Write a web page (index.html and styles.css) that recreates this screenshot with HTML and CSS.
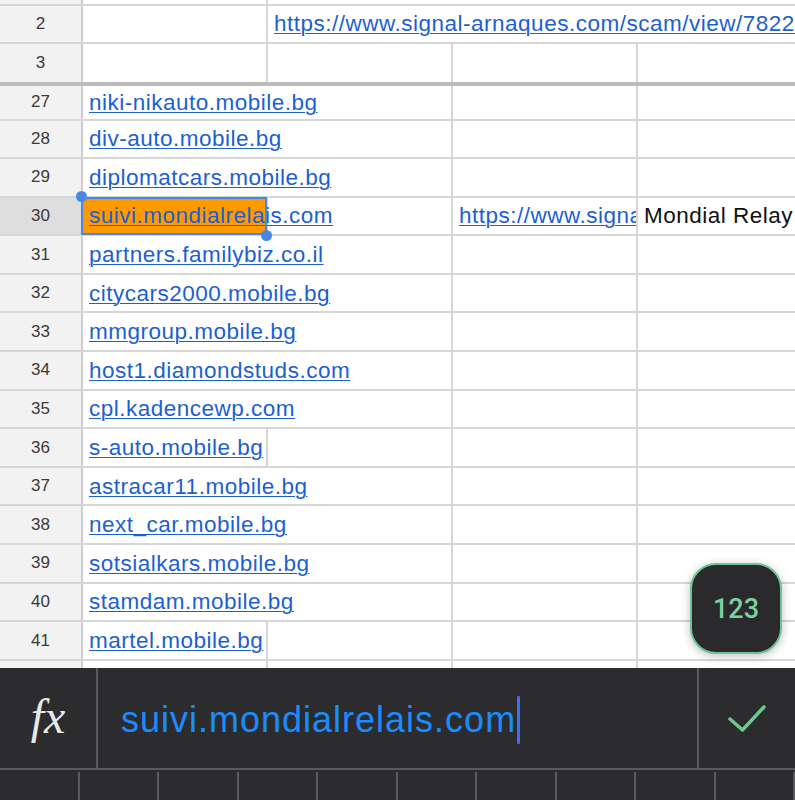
FILE: index.html
```html
<!DOCTYPE html>
<html lang="fr">
<head>
    <meta charset="UTF-8">
    <meta name="viewport" content="width=device-width, initial-scale=1.0">
    <title>Feuille de calcul</title>
    <link rel="stylesheet" href="styles.css">
</head>
<body>
    <div class="sheet">
        <div class="row row-top">
            <div class="num"></div>
            <div class="cell"></div>
            <div class="cell rest"></div>
        </div>
        <div class="row">
            <div class="num">2</div>
            <div class="cell"></div>
            <div class="cell rest"><a class="link" href="#">https://www.signal-arnaques.com/scam/view/782254</a></div>
        </div>
        <div class="row row-frozen">
            <div class="num">3</div>
            <div class="cell"></div>
            <div class="cell"></div>
            <div class="cell"></div>
            <div class="cell"></div>
        </div>

        <div class="row row-first">
            <div class="num">27</div>
            <div class="cell wide"><a class="link" href="#">niki-nikauto.mobile.bg</a></div>
            <div class="cell"></div>
            <div class="cell"></div>
        </div>
        <div class="row">
            <div class="num">28</div>
            <div class="cell wide"><a class="link" href="#">div-auto.mobile.bg</a></div>
            <div class="cell"></div>
            <div class="cell"></div>
        </div>
        <div class="row">
            <div class="num">29</div>
            <div class="cell wide"><a class="link" href="#">diplomatcars.mobile.bg</a></div>
            <div class="cell"></div>
            <div class="cell"></div>
        </div>
        <div class="row row-active">
            <div class="num">30</div>
            <div class="cell selected">
                <a class="link" href="#">suivi.mondialrelais.com</a>
                <span class="handle handle-start"></span>
                <span class="handle handle-end"></span>
            </div>
            <div class="cell"></div>
            <div class="cell"><a class="link" href="#">https://www.signal-arnaques.com/scam/view/782254</a></div>
            <div class="cell"><span class="plain">Mondial Relay</span></div>
        </div>
        <div class="row">
            <div class="num">31</div>
            <div class="cell wide"><a class="link" href="#">partners.familybiz.co.il</a></div>
            <div class="cell"></div>
            <div class="cell"></div>
        </div>
        <div class="row">
            <div class="num">32</div>
            <div class="cell wide"><a class="link" href="#">citycars2000.mobile.bg</a></div>
            <div class="cell"></div>
            <div class="cell"></div>
        </div>
        <div class="row">
            <div class="num">33</div>
            <div class="cell wide"><a class="link" href="#">mmgroup.mobile.bg</a></div>
            <div class="cell"></div>
            <div class="cell"></div>
        </div>
        <div class="row">
            <div class="num">34</div>
            <div class="cell wide"><a class="link" href="#">host1.diamondstuds.com</a></div>
            <div class="cell"></div>
            <div class="cell"></div>
        </div>
        <div class="row">
            <div class="num">35</div>
            <div class="cell wide"><a class="link" href="#">cpl.kadencewp.com</a></div>
            <div class="cell"></div>
            <div class="cell"></div>
        </div>
        <div class="row">
            <div class="num">36</div>
            <div class="cell"><a class="link" href="#">s-auto.mobile.bg</a></div>
            <div class="cell"></div>
            <div class="cell"></div>
            <div class="cell"></div>
        </div>
        <div class="row">
            <div class="num">37</div>
            <div class="cell wide"><a class="link" href="#">astracar11.mobile.bg</a></div>
            <div class="cell"></div>
            <div class="cell"></div>
        </div>
        <div class="row">
            <div class="num">38</div>
            <div class="cell wide"><a class="link" href="#">next_car.mobile.bg</a></div>
            <div class="cell"></div>
            <div class="cell"></div>
        </div>
        <div class="row">
            <div class="num">39</div>
            <div class="cell wide"><a class="link" href="#">sotsialkars.mobile.bg</a></div>
            <div class="cell"></div>
            <div class="cell"></div>
        </div>
        <div class="row">
            <div class="num">40</div>
            <div class="cell wide"><a class="link" href="#">stamdam.mobile.bg</a></div>
            <div class="cell"></div>
            <div class="cell"></div>
        </div>
        <div class="row">
            <div class="num">41</div>
            <div class="cell"><a class="link" href="#">martel.mobile.bg</a></div>
            <div class="cell"></div>
            <div class="cell"></div>
            <div class="cell"></div>
        </div>
        <div class="row">
            <div class="num"></div>
            <div class="cell"></div>
            <div class="cell"></div>
            <div class="cell"></div>
            <div class="cell"></div>
        </div>
    </div>

    <button class="keypad-toggle">123</button>

    <div class="formula-bar">
        <div class="fx">fx</div>
        <div class="entry">
            <span class="entry-text">suivi.mondialrelais.com</span><span class="caret"></span>
        </div>
        <div class="confirm">
            <svg class="check-icon" viewBox="0 0 40 30">
                <path d="M3 16 L15.5 27 L37 4"/>
            </svg>
        </div>
    </div>

    <div class="keys">
        <div class="key"></div>
        <div class="key"></div>
        <div class="key"></div>
        <div class="key"></div>
        <div class="key"></div>
        <div class="key"></div>
        <div class="key"></div>
        <div class="key"></div>
        <div class="key"></div>
        <div class="key"></div>
    </div>
</body>
</html>
```

FILE: styles.css
```css
* {
    margin: 0;
    padding: 0;
    box-sizing: border-box;
}

body {
    font-family: "Liberation Sans", Arial, sans-serif;
    background: #2c2c2e;
    width: 795px;
    height: 800px;
    overflow: hidden;
    position: relative;
}

.sheet {
    height: 668px;
    overflow: hidden;
    background: #ffffff;
}

.row {
    display: grid;
    grid-template-columns: 83px 185px 185px 185px 1fr;
    height: 37.5px;
    border-bottom: 2px solid #d6d6d6;
}

.row-top {
    height: 6px;
}

.row-frozen {
    height: 42px;
    border-bottom: 4px solid #bcbcbc;
}

.row-first {
    height: 35px;
}

.row-first ~ .row {
    height: 38.6px;
}

.num {
    background: #f2f2f2;
    border-right: 2px solid #cdcdcd;
    display: flex;
    align-items: center;
    justify-content: center;
    font-size: 17px;
    color: #3a3a3a;
}

.row-active .num {
    background: #dedede;
}

.cell {
    border-right: 2px solid #d6d6d6;
    display: flex;
    align-items: center;
    padding-left: 6px;
    padding-top: 1px;
    white-space: nowrap;
    overflow: hidden;
    min-width: 0;
}

.cell:last-child {
    border-right: none;
}

.wide {
    grid-column: span 2;
}

.rest {
    grid-column: 3 / -1;
    border-right: none;
}

.link {
    color: #1c5fd3;
    text-decoration: underline;
    text-decoration-thickness: 1px;
    text-underline-offset: 2px;
    font-size: 22.5px;
    letter-spacing: 0.5px;
}

.plain {
    color: #111111;
    font-size: 22.5px;
    letter-spacing: 0.5px;
}

.selected {
    background: #ff9900;
    overflow: visible;
    position: relative;
}

.selected::after {
    content: '';
    position: absolute;
    top: -1px;
    left: -2px;
    right: -1px;
    bottom: -1px;
    border: 2px solid #4a86e8;
}

.handle {
    position: absolute;
    width: 11px;
    height: 11px;
    border-radius: 50%;
    background: #4a86e8;
    z-index: 2;
}

.handle-start {
    top: -7px;
    left: -7px;
}

.handle-end {
    bottom: -7px;
    right: -6px;
}

.keypad-toggle {
    position: absolute;
    left: 690px;
    top: 563px;
    width: 92px;
    height: 91px;
    border-radius: 26px;
    background: #2a2a2d;
    border: 2px solid #6cc490;
    color: #7ad39e;
    font-family: Roboto, "Liberation Sans", sans-serif;
    font-size: 27px;
    font-weight: 500;
    box-shadow: 0 2px 10px rgba(0, 0, 0, 0.25);
}

.formula-bar {
    display: grid;
    grid-template-columns: 98px 1fr 98px;
    height: 102px;
    background: #2c2c2e;
    border-bottom: 2px solid #5a5a5e;
}

.fx {
    border-right: 2px solid #5a5a5e;
    display: flex;
    align-items: center;
    justify-content: center;
    font-family: "Liberation Serif", "DejaVu Serif", serif;
    font-style: italic;
    font-size: 48px;
    color: #e8e8e8;
    padding-bottom: 4px;
}

.entry {
    display: flex;
    align-items: center;
    padding-left: 23px;
    padding-top: 4px;
}

.entry-text {
    color: #1a8cff;
    font-size: 36px;
    letter-spacing: 1px;
}

.caret {
    width: 3px;
    height: 48px;
    margin-left: 1px;
    background: #3b6ff5;
    border-radius: 1px;
}

.confirm {
    border-left: 2px solid #5a5a5e;
    display: flex;
    align-items: center;
    justify-content: center;
}

.check-icon {
    width: 40px;
    height: 30px;
    fill: none;
    stroke: #6cc98d;
    stroke-width: 3.5;
    stroke-linecap: round;
    stroke-linejoin: round;
}

.keys {
    display: grid;
    grid-template-columns: repeat(10, 1fr);
    height: 30px;
    padding-top: 2px;
}

.key {
    border-right: 2px solid #5a5a5e;
}
```
